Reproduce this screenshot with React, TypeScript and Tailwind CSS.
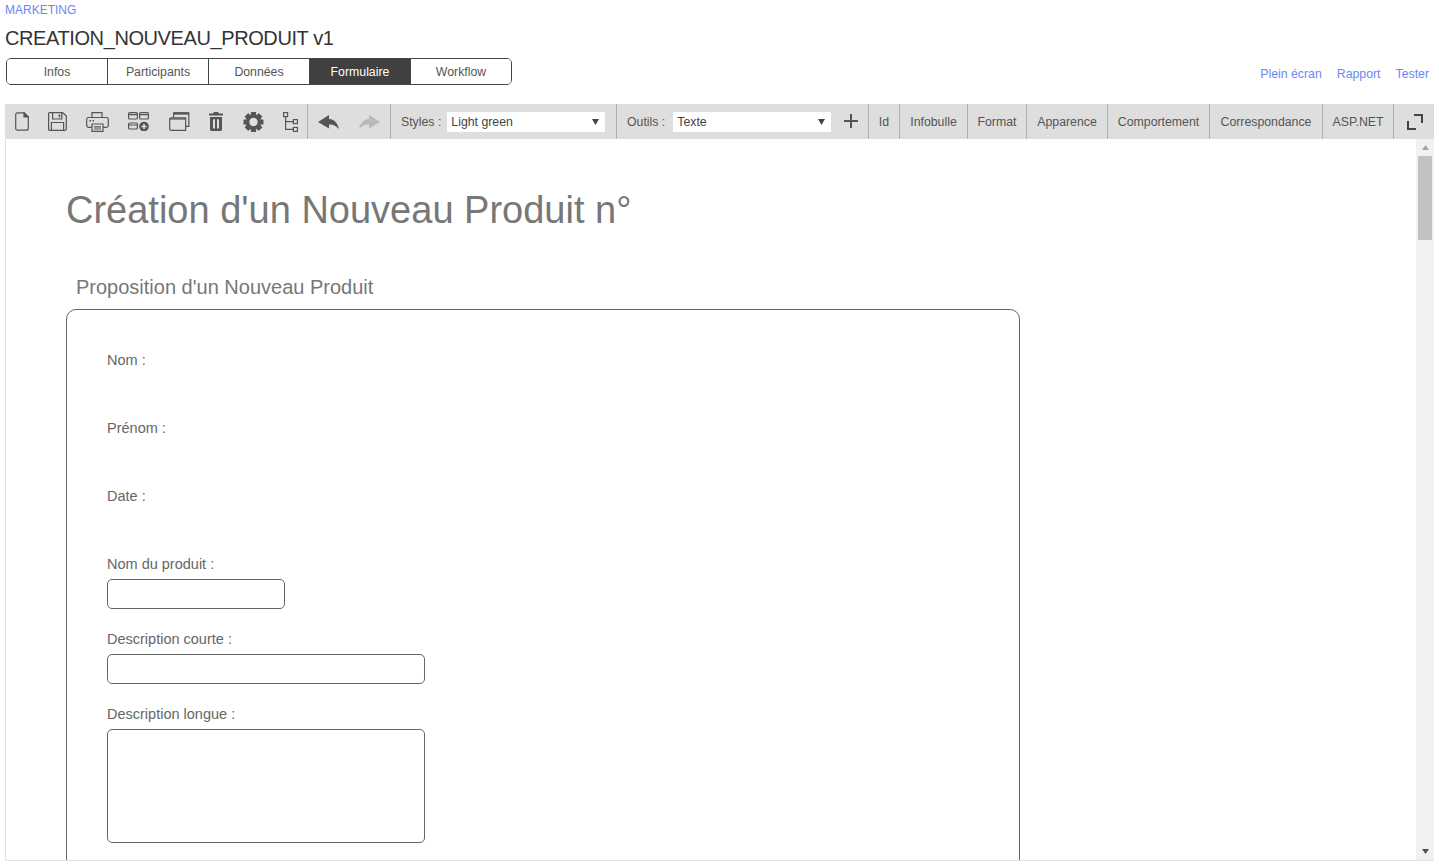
const tabs = ['Infos', 'Participants', 'Données', 'Formulaire', 'Workflow']

const toolTabs = [
  { label: 'Id', width: 'w-[31px]' },
  { label: 'Infobulle', width: 'w-[68px]' },
  { label: 'Format', width: 'w-[59px]' },
  { label: 'Apparence', width: 'w-[81px]' },
  { label: 'Comportement', width: 'w-[102px]' },
  { label: 'Correspondance', width: 'w-[113px]' },
  { label: 'ASP.NET', width: 'w-[71px]' },
]

function Select({ value, width }: { value: string; width: string }) {
  return (
    <div className={`${width} h-5 bg-white flex items-center justify-between pl-1 pr-1.5 text-[#444]`}>
      <span className="pt-[2px]">{value}</span>
      <svg width="7" height="6" viewBox="0 0 7 6"><path d="M0 0h7L3.500 6z" fill="#444" /></svg>
    </div>
  )
}

function Label({ children, className = '' }: { children: React.ReactNode; className?: string }) {
  return <div className={`text-[14.5px] leading-4 text-[#666] ${className}`}>{children}</div>
}

export default function App() {
  return (
    <div className="w-[1439px] h-[867px] overflow-hidden bg-white font-['Liberation_Sans',Arial,sans-serif]">
      <div className="pl-[5px] pt-[3px] text-[12px] leading-[15px] text-[#6b87f5]">MARKETING</div>
      <div className="pl-[5px] mt-[9px] text-[20px] leading-[23px] tracking-[-0.4px] text-[#333]">CREATION_NOUVEAU_PRODUIT v1</div>

      <div className="flex items-center justify-between pl-[6px] pr-[10px] mt-[8px]">
        <div className="flex w-[506px] h-[27px] border border-[#444] rounded-[5px] overflow-hidden">
          {tabs.map((tab, i) => (
            <div
              key={tab}
              className={`flex-1 flex items-center justify-center pt-[2px] text-[12.3px] ${i < 4 ? 'border-r border-[#444]' : ''} ${
                tab === 'Formulaire' ? 'bg-[#404040] text-white' : 'bg-white text-[#555]'
              }`}
            >
              {tab}
            </div>
          ))}
        </div>
        <div className="flex gap-[15px] text-[12.3px] text-[#6b87f5] mt-[6px]">
          <span>Plein écran</span>
          <span>Rapport</span>
          <span>Tester</span>
        </div>
      </div>

      <div className="ml-[5px] mt-[19px] w-[1429px] h-[757px] flex flex-col border-b border-[#e2e2e2]">
        <div className="h-[35px] shrink-0 bg-[#dedede] flex items-center text-[12.3px] text-[#555]">
          <div className="flex items-center gap-[19px] h-full pl-[10px] w-[302px] shrink-0">
            <svg width="14" height="19" viewBox="0 0 14 19" fill="none" stroke="#555" strokeWidth="1.2">
              <path d="M2.500.8H9L13.300 5v11.200a2 2 0 0 1-2 2H2.500a1.800 1.800 0 0 1-1.800-1.800V2.600A1.800 1.800 0 0 1 2.500.8z" />
              <path d="M9 .8L13.300 5H9z" fill="#555" />
            </svg>
            <svg width="19" height="19" viewBox="0 0 19 19" fill="none" stroke="#555" strokeWidth="1.2">
              <path d="M1.500.7h13.200l3.600 3.400v13a1.200 1.200 0 0 1-1.200 1.200H1.500a.9.9 0 0 1-.9-.9V1.600a.9.9 0 0 1 .9-.9z" />
              <path d="M4.600.8v6.200h9.200V.8" />
              <path d="M3.400 18.200v-7.700h12.200v7.700" />
              <path d="M10.600 2.400h1.600v3h-1.600z" fill="#555" stroke="none" />
            </svg>
            <svg width="23" height="20" viewBox="0 0 23 20" fill="none" stroke="#555" strokeWidth="1.2">
              <path d="M6 5.500V.7h10v4.800" />
              <path d="M6 15.400H2.400A1.800 1.800 0 0 1 .7 13.600V7.200a1.800 1.800 0 0 1 1.800-1.700h18a1.800 1.800 0 0 1 1.800 1.700v6.400a1.800 1.800 0 0 1-1.800 1.800H17" />
              <path d="M6 12h11v7.300H6z" fill="#dedede" />
              <path d="M8 14.800h7M8 17h7" />
              <path d="M3.400 8h1.600v1.400H3.400zM6.400 8H8v1.400H6.400z" fill="#555" stroke="none" />
            </svg>
            <svg width="22" height="19" viewBox="0 0 22 19" fill="none" stroke="#555" strokeWidth="1.2">
              <rect x=".6" y=".6" width="8.800" height="6.400" rx="1" />
              <rect x="11.600" y=".6" width="8.800" height="6.400" rx="1" />
              <rect x=".6" y="11" width="8.800" height="6" rx="1" />
              <path d="M.6 2.600h8.800M11.600 2.600h8.800M.6 13h8.800" />
              <circle cx="16" cy="14.500" r="4.800" fill="#555" stroke="none" />
              <path d="M16 12v5M13.500 14.500h5" stroke="#dedede" strokeWidth="1.600" />
            </svg>
            <svg width="21" height="19" viewBox="0 0 21 19" fill="none" stroke="#555" strokeWidth="1.2">
              <path d="M4.600 6V1h15.200v13.400H17" />
              <path d="M4.600 1.400h15.200" strokeWidth="2.400" />
              <path d="M2.400 5.800h14.200v12.600H2.400A1.700 1.700 0 0 1 .7 16.700V7.500a1.700 1.700 0 0 1 1.700-1.700z" fill="#dedede" />
              <path d="M.8 7h15.800" />
            </svg>
            <svg width="15" height="19" viewBox="0 0 15 19" fill="#555">
              <path d="M4.500 0h5v1.500H14V3.600H0V1.500h4.500z" />
              <path fillRule="evenodd" d="M1 5h12v12.400a1.600 1.600 0 0 1-1.600 1.600H2.600A1.600 1.600 0 0 1 1 17.400zM4 7.200v9.400h2V7.200zM8 7.200v9.400h2V7.200z" />
            </svg>
            <svg width="21" height="20" viewBox="0 0 20 20">
              <g fill="#555">
                <circle cx="10" cy="10" r="7.800" />
                <rect x="7.400" y="0" width="5.200" height="20" rx=".6" />
                <rect x="7.400" y="0" width="5.200" height="20" rx=".6" transform="rotate(45 10 10)" />
                <rect x="7.400" y="0" width="5.200" height="20" rx=".6" transform="rotate(90 10 10)" />
                <rect x="7.400" y="0" width="5.200" height="20" rx=".6" transform="rotate(135 10 10)" />
              </g>
              <circle cx="10" cy="10" r="4.200" fill="#dedede" />
            </svg>
            <svg width="15" height="20" viewBox="0 0 15 20" fill="none" stroke="#555" strokeWidth="1.2">
              <rect x=".6" y=".6" width="4" height="4" />
              <rect x="10.400" y="7.600" width="4" height="4" />
              <rect x="10.400" y="15.400" width="4" height="4" />
              <path d="M2.600 4.600v12.800h7.800M2.600 9.600h7.800" />
            </svg>
          </div>
          <div className="w-px h-full bg-[#aeaeae] shrink-0" />

          <div className="w-[82px] h-full flex items-center justify-center gap-[20px] shrink-0">
            <svg width="21" height="14" viewBox="0 0 21 14" fill="#555">
              <path d="M0 7L11 0v4C17 4.500 20 9 21 14c-4-4-7-4.500-10-4.500V13.500z" />
            </svg>
            <svg width="21" height="14" viewBox="0 0 21 14" fill="#b9b9b9">
              <path d="M21 7L10 0v4C4 4.500 1 9 0 14c4-4 7-4.500 10-4.500V13.500z" />
            </svg>
          </div>
          <div className="w-px h-full bg-[#aeaeae] shrink-0" />

          <div className="w-[225px] h-full flex items-center pl-[10px] gap-[6px] shrink-0">
            <span className="pt-[2px]">Styles :</span>
            <Select value="Light green" width="w-[158px]" />
          </div>
          <div className="w-px h-full bg-[#aeaeae] shrink-0" />

          <div className="w-[251px] h-full flex items-center pl-[10px] gap-[8px] shrink-0">
            <span className="pt-[2px]">Outils :</span>
            <Select value="Texte" width="w-[158px]" />
            <svg className="ml-[5px] mb-[2px]" width="14" height="14" viewBox="0 0 14 14" fill="#555">
              <path d="M6 0h2v6h6v2H8v6H6V8H0V6h6z" />
            </svg>
          </div>

          {toolTabs.map(t => (
            <div key={t.label} className={`${t.width} h-full flex items-center justify-center pt-[2px] border-l border-[#aeaeae] shrink-0`}>
              {t.label}
            </div>
          ))}

          <div className="flex-1 h-full flex items-center justify-center pl-[1px] border-l border-[#aeaeae]">
            <svg width="18" height="18" viewBox="0 0 18 18" fill="none" stroke="#444" strokeWidth="2">
              <path d="M8 2h8v8M2 8v8h8" />
            </svg>
          </div>
        </div>

        <div className="flex-1 min-h-0 flex border-l border-[#e2e2e2]">
          <div className="flex-1 min-w-0 overflow-hidden pl-[60px]">
            <h1 className="mt-[48px] text-[38px] leading-[46px] text-[#777]">Création d'un Nouveau Produit n°</h1>
            <h2 className="mt-[43px] pl-[10px] text-[20px] leading-[23px] text-[#777]">Proposition d'un Nouveau Produit</h2>

            <div className="mt-[10px] w-[954px] h-[700px] border border-[#666] rounded-[10px] pl-[40px] pt-[42px]">
              <Label>Nom :</Label>
              <Label className="mt-[52px]">Prénom :</Label>
              <Label className="mt-[52px]">Date :</Label>
              <Label className="mt-[52px]">Nom du produit :</Label>
              <div className="mt-[7px] w-[178px] h-[30px] border border-[#666] rounded-[5px]" />
              <Label className="mt-[22px]">Description courte :</Label>
              <div className="mt-[7px] w-[318px] h-[30px] border border-[#666] rounded-[5px]" />
              <Label className="mt-[22px]">Description longue :</Label>
              <div className="mt-[7px] w-[318px] h-[114px] border border-[#666] rounded-[5px]" />
            </div>
          </div>

          <div className="w-[18px] shrink-0 bg-[#f1f1f1] flex flex-col items-center">
            <div className="h-[17px] flex items-center justify-center shrink-0">
              <svg width="7" height="5" viewBox="0 0 7 5"><path d="M3.500 0L7 5H0z" fill="#a3a3a3" /></svg>
            </div>
            <div className="w-[14px] h-[84px] bg-[#c1c1c1] shrink-0" />
            <div className="flex-1" />
            <div className="h-[17px] flex items-center justify-center shrink-0">
              <svg width="7" height="5" viewBox="0 0 7 5"><path d="M0 0h7L3.500 5z" fill="#505050" /></svg>
            </div>
          </div>
        </div>
      </div>
    </div>
  )
}
